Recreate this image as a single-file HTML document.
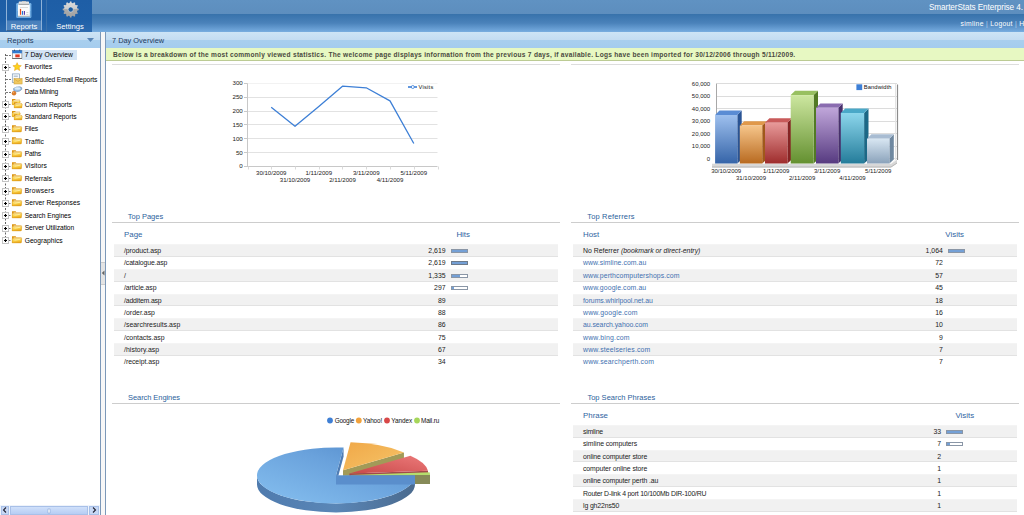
<!DOCTYPE html><html><head><meta charset="utf-8"><style>
*{margin:0;padding:0;box-sizing:border-box}
html,body{width:1024px;height:515px;overflow:hidden;background:#fff;font-family:"Liberation Sans",sans-serif;color:#222}
.a{position:absolute;white-space:nowrap}
#hdr{position:absolute;left:0;top:0;width:1024px;height:32px;background:linear-gradient(#6092c2 0,#5d8ebe 14px,#3772ab 14px,#4a82ba 23px,#72a8dc 31px,#7aaedf 32px)}
#btns{position:absolute;left:0;top:0;width:92px;height:32px;background:linear-gradient(#1e5ea6 0,#1f60a8 20px,#2c6aae 32px)}
.btn{position:absolute;top:0;height:31px}
#b1{left:6px;width:36px;border:1px solid #8fb2d8;border-bottom-color:#3d6590;border-top:none;background:linear-gradient(#1f5fa6 0,#1f5fa6 20px,#4a80bc 21px,#4f86c2 31px)}
#sep{position:absolute;left:46px;top:0;width:1px;height:32px;background:#3a70ab}
.bt{position:absolute;top:22px;font-size:7.6px;color:#fff;width:46px;text-align:center}
.subh{position:absolute;top:32px;height:16px;background:linear-gradient(#cde4f6 0,#c3dcf2 8px,#a9cfee 8px,#a5ccee 16px)}
.vl{position:absolute;top:32px;width:1px;height:483px;background:#7c98b8}
#split{position:absolute;left:101px;top:32px;width:4px;height:483px;background:#f7f7f7}
#notice{position:absolute;left:106px;top:48px;width:918px;height:13px;background:#e7f8c2;border-bottom:1px solid #bccb94}
.tree{position:absolute;left:24.5px;height:12px;line-height:12px;font-size:6.6px;color:#1a1a1a;white-space:nowrap}
.sec{position:absolute;font-size:7px;color:#3c6ea6;letter-spacing:0.25px;white-space:nowrap;line-height:10px}
.hl{position:absolute;height:1px;background:#d0d0d0}
.th{position:absolute;font-size:7.3px;color:#3f72a8;line-height:10px;white-space:nowrap}
.row{position:absolute;background:#f1f1f1;border-bottom:1px solid #e2e2e2;border-top:1px solid #f4f4f4}
.td{position:absolute;font-size:6.9px;color:#222;line-height:12px;white-space:nowrap}
.num{text-align:right}
.lk{color:#3b68ad}
.bar{position:absolute;height:4px;border:1px solid #707a88;background:#fff;overflow:hidden}
.bar i{position:absolute;left:0;top:0;bottom:0;background:#74a0d6}
</style></head><body>
<div id="hdr"></div>
<div id="btns">
  <div class="btn" id="b1"></div>
  <div id="sep"></div>
  <svg class="a" style="left:0;top:0" width="92" height="20" viewBox="0 0 92 20">
    <rect x="16.2" y="3" width="15.2" height="15" rx="1.2" fill="#78b4e8"/>
    <rect x="16.8" y="11" width="14" height="6.5" fill="#5a9ad6" opacity="0.6"/>
    <rect x="18" y="4.5" width="11.8" height="12.2" fill="#fbfbfb"/>
    <rect x="18" y="15.8" width="11.8" height="0.9" fill="#9aa6b0"/>
    <rect x="18.7" y="1.5" width="10.3" height="3.2" rx="0.6" fill="#e6e6e6"/>
    <rect x="18.7" y="3.8" width="10.3" height="1" fill="#9a9a9a"/>
    <rect x="22" y="1" width="4" height="1.2" fill="#c8c8c8"/>
    <rect x="20" y="7" width="8" height="0.5" fill="#b8b8b8"/>
    <rect x="19.9" y="8.9" width="1.2" height="5.9" fill="#e84a1a"/>
    <rect x="21.9" y="11" width="1.1" height="3.8" fill="#1f7ad8"/>
    <rect x="23.8" y="11" width="1.2" height="3.8" fill="#5a3aa8"/>
    <rect x="26.3" y="12" width="2" height="0.6" fill="#bbb"/>
    <rect x="26.3" y="14.2" width="2" height="0.6" fill="#bbb"/>
  </svg>
  <div class="a bt" style="left:1px">Reports</div>
  <svg class="a" style="left:0;top:0" width="92" height="20" viewBox="0 0 92 20">
    <defs><linearGradient id="gg" x1="0" y1="0" x2="0" y2="1"><stop offset="0" stop-color="#dedede"/><stop offset="0.5" stop-color="#cacaca"/><stop offset="0.5" stop-color="#ababab"/><stop offset="1" stop-color="#a2a2a2"/></linearGradient></defs>
    <path d="M77.32 8.45L78.67 8.80L78.67 10.20L77.32 10.55L76.95 11.90L77.95 12.88L77.25 14.09L75.91 13.72L74.92 14.71L75.29 16.05L74.08 16.75L73.10 15.75L71.75 16.12L71.40 17.47L70.00 17.47L69.65 16.12L68.30 15.75L67.32 16.75L66.11 16.05L66.48 14.71L65.49 13.72L64.15 14.09L63.45 12.88L64.45 11.90L64.08 10.55L62.73 10.20L62.73 8.80L64.08 8.45L64.45 7.10L63.45 6.12L64.15 4.91L65.49 5.28L66.48 4.29L66.11 2.95L67.32 2.25L68.30 3.25L69.65 2.88L70.00 1.53L71.40 1.53L71.75 2.88L73.10 3.25L74.08 2.25L75.29 2.95L74.92 4.29L75.91 5.28L77.25 4.91L77.95 6.12L76.95 7.10Z" fill="url(#gg)"/>
    <circle cx="70.7" cy="9.5" r="2.6" fill="#1d5ea2" stroke="#e8e8e8" stroke-width="0.6"/>
  </svg>
  <div class="a bt" style="left:47px">Settings</div>
</div>
<div class="a" style="left:929px;top:3.1px;font-size:8.2px;color:#fff;letter-spacing:-0.1px">SmarterStats Enterprise 4.</div>
<div class="a" style="left:960.5px;top:19.8px;font-size:6.8px;color:#fff;letter-spacing:0.3px">simline <span style="color:#b8d4f0">|</span> Logout <span style="color:#b8d4f0">|</span> Help</div>
<div class="subh" style="left:0;width:101px"></div>
<div class="a" style="left:7px;top:36px;font-size:7.6px;color:#1f3a60">Reports</div>
<svg class="a" style="left:87px;top:38px" width="7" height="5"><path d="M0 0H7L3.5 4Z" fill="#5a86b6"/></svg>
<div id="split"></div>
<div class="vl" style="left:100px"></div>
<div class="vl" style="left:105px"></div>
<div class="subh" style="left:106px;width:918px"></div>
<div class="a" style="left:112px;top:36px;font-size:7.4px;color:#1f3a60">7 Day Overview</div>
<div id="notice"></div>
<div class="a" style="left:113px;top:50.9px;font-size:6.6px;font-weight:bold;color:#4a4a40;letter-spacing:0.27px">Below is a breakdown of the most commonly viewed statistics. The welcome page displays information from the previous 7 days, if available. Logs have been imported for 30/12/2006 through 5/11/2009.</div>
<div class="hl" style="left:112px;top:64px;width:448px;background:#dddddd"></div>
<div class="hl" style="left:571px;top:64px;width:448px;background:#dddddd"></div>

<div class="a" style="left:22px;top:50px;width:55px;height:10px;background:#d3e4f5"></div>
<svg class="a" style="left:0;top:0" width="100" height="250">
<defs><linearGradient id="fg" x1="0" y1="0" x2="0.3" y2="1"><stop offset="0" stop-color="#ffe680"/><stop offset="0.6" stop-color="#f8cc40"/><stop offset="1" stop-color="#e8a820"/></linearGradient></defs>
<path d="M5.5 54V243" stroke="#666" stroke-width="1" stroke-dasharray="2 1.5" fill="none"/>
<path d="M6 55.5H11.5" stroke="#777" stroke-width="1" stroke-dasharray="2 1" fill="none"/>
<rect x="12.3" y="50.3" width="9.6" height="8.3" fill="#fafafa" stroke="#707070" stroke-width="0.6"/><rect x="12.3" y="50.3" width="9.6" height="3" fill="#2f7ad0"/><rect x="14" y="49.6" width="0.8" height="1.4" fill="#345"/><rect x="19.4" y="49.6" width="0.8" height="1.4" fill="#345"/><rect x="15.3" y="54.4" width="4.4" height="2.9" fill="#e03a22"/><rect x="12.3" y="58.2" width="9.6" height="0.6" fill="#444"/>
<path d="M8.5 67.5H11.5" stroke="#777" stroke-width="1" stroke-dasharray="2 1" fill="none"/>
<rect x="2.5" y="64.5" width="6" height="6" fill="#fff" stroke="#c4c4c4" stroke-width="1"/>
<path d="M4 67.5H7M5.5 66.0V69.0" stroke="#000" stroke-width="1.1"/>
<g transform="translate(12.9 62.4) scale(0.84)"><path d="M5 0.3L6.5 3.5L10 3.9L7.4 6.2L8.1 9.7L5 7.9L1.9 9.7L2.6 6.2L0 3.9L3.5 3.5Z" fill="#fcd21c" stroke="#e89a10" stroke-width="0.6"/></g>
<path d="M6 79.5H11.5" stroke="#777" stroke-width="1" stroke-dasharray="2 1" fill="none"/>
<rect x="12.3" y="73.9" width="7.2" height="8.6" fill="#f6f8fa" stroke="#7f9ab8" stroke-width="0.7"/><rect x="13.8" y="75.6" width="4" height="1.2" fill="#a8b8c8"/><rect x="14" y="78.6" width="8.1" height="5.4" fill="#f0c860" stroke="#c89a30" stroke-width="0.5"/><path d="M14 78.8L18 81.5L22 78.8" stroke="#c89a30" stroke-width="0.5" fill="none"/>
<path d="M6 92.5H11.5" stroke="#777" stroke-width="1" stroke-dasharray="2 1" fill="none"/>
<path d="M13.5 88.5Q16 86.5 20 86.8Q22.5 87.3 21.8 89.3Q20.5 91.5 16.5 91.8Q13 91.7 13.5 88.5Z" fill="#9cc0e6" stroke="#6f8eb0" stroke-width="0.6"/><ellipse cx="17.5" cy="88.5" rx="3" ry="1.2" fill="#d8ecfc"/><circle cx="14" cy="93.2" r="2.2" fill="#d87a2a"/><circle cx="13.5" cy="92.6" r="0.8" fill="#f0a860"/>
<path d="M8.5 104.5H11.5" stroke="#777" stroke-width="1" stroke-dasharray="2 1" fill="none"/>
<rect x="2.5" y="101.5" width="6" height="6" fill="#fff" stroke="#c4c4c4" stroke-width="1"/>
<path d="M4 104.5H7M5.5 103.0V106.0" stroke="#000" stroke-width="1.1"/>
<g transform="translate(12 98.8) scale(0.85)"><path d="M0 0.3h3.6l0.8 0.9h5v5.6h-9.4z" fill="#dc9410"/><path d="M1.6 1.6h7.6v3h-7.6z" fill="#fff8e0"/><path d="M0.2 2.6h9.6l-0.7 4.3h-8.9z" fill="url(#fg)" stroke="#d89818" stroke-width="0.4"/><path d="M2.5 4.2l5.5 -0.9" stroke="#fff2b0" stroke-width="0.8"/></g>
<g transform="translate(14 102) scale(0.85)"><path d="M0 0.3h3.6l0.8 0.9h5v5.6h-9.4z" fill="#dc9410"/><path d="M1.6 1.6h7.6v3h-7.6z" fill="#fff8e0"/><path d="M0.2 2.6h9.6l-0.7 4.3h-8.9z" fill="url(#fg)" stroke="#d89818" stroke-width="0.4"/><path d="M2.5 4.2l5.5 -0.9" stroke="#fff2b0" stroke-width="0.8"/></g>
<path d="M8.5 116.5H11.5" stroke="#777" stroke-width="1" stroke-dasharray="2 1" fill="none"/>
<rect x="2.5" y="113.5" width="6" height="6" fill="#fff" stroke="#c4c4c4" stroke-width="1"/>
<path d="M4 116.5H7M5.5 115.0V118.0" stroke="#000" stroke-width="1.1"/>
<g transform="translate(12 110.8) scale(0.85)"><path d="M0 0.3h3.6l0.8 0.9h5v5.6h-9.4z" fill="#dc9410"/><path d="M1.6 1.6h7.6v3h-7.6z" fill="#fff8e0"/><path d="M0.2 2.6h9.6l-0.7 4.3h-8.9z" fill="url(#fg)" stroke="#d89818" stroke-width="0.4"/><path d="M2.5 4.2l5.5 -0.9" stroke="#fff2b0" stroke-width="0.8"/></g>
<g transform="translate(14 114) scale(0.85)"><path d="M0 0.3h3.6l0.8 0.9h5v5.6h-9.4z" fill="#dc9410"/><path d="M1.6 1.6h7.6v3h-7.6z" fill="#fff8e0"/><path d="M0.2 2.6h9.6l-0.7 4.3h-8.9z" fill="url(#fg)" stroke="#d89818" stroke-width="0.4"/><path d="M2.5 4.2l5.5 -0.9" stroke="#fff2b0" stroke-width="0.8"/></g>
<path d="M8.5 129.5H11.5" stroke="#777" stroke-width="1" stroke-dasharray="2 1" fill="none"/>
<rect x="2.5" y="126.5" width="6" height="6" fill="#fff" stroke="#c4c4c4" stroke-width="1"/>
<path d="M4 129.5H7M5.5 128.0V131.0" stroke="#000" stroke-width="1.1"/>
<g transform="translate(12 125) scale(1.0)"><path d="M0 0.3h3.6l0.8 0.9h5v5.6h-9.4z" fill="#dc9410"/><path d="M1.6 1.6h7.6v3h-7.6z" fill="#fff8e0"/><path d="M0.2 2.6h9.6l-0.7 4.3h-8.9z" fill="url(#fg)" stroke="#d89818" stroke-width="0.4"/><path d="M2.5 4.2l5.5 -0.9" stroke="#fff2b0" stroke-width="0.8"/></g>
<path d="M8.5 141.5H11.5" stroke="#777" stroke-width="1" stroke-dasharray="2 1" fill="none"/>
<rect x="2.5" y="138.5" width="6" height="6" fill="#fff" stroke="#c4c4c4" stroke-width="1"/>
<path d="M4 141.5H7M5.5 140.0V143.0" stroke="#000" stroke-width="1.1"/>
<g transform="translate(12 137) scale(1.0)"><path d="M0 0.3h3.6l0.8 0.9h5v5.6h-9.4z" fill="#dc9410"/><path d="M1.6 1.6h7.6v3h-7.6z" fill="#fff8e0"/><path d="M0.2 2.6h9.6l-0.7 4.3h-8.9z" fill="url(#fg)" stroke="#d89818" stroke-width="0.4"/><path d="M2.5 4.2l5.5 -0.9" stroke="#fff2b0" stroke-width="0.8"/></g>
<path d="M8.5 154.5H11.5" stroke="#777" stroke-width="1" stroke-dasharray="2 1" fill="none"/>
<rect x="2.5" y="151.5" width="6" height="6" fill="#fff" stroke="#c4c4c4" stroke-width="1"/>
<path d="M4 154.5H7M5.5 153.0V156.0" stroke="#000" stroke-width="1.1"/>
<g transform="translate(12 150) scale(1.0)"><path d="M0 0.3h3.6l0.8 0.9h5v5.6h-9.4z" fill="#dc9410"/><path d="M1.6 1.6h7.6v3h-7.6z" fill="#fff8e0"/><path d="M0.2 2.6h9.6l-0.7 4.3h-8.9z" fill="url(#fg)" stroke="#d89818" stroke-width="0.4"/><path d="M2.5 4.2l5.5 -0.9" stroke="#fff2b0" stroke-width="0.8"/></g>
<path d="M8.5 166.5H11.5" stroke="#777" stroke-width="1" stroke-dasharray="2 1" fill="none"/>
<rect x="2.5" y="163.5" width="6" height="6" fill="#fff" stroke="#c4c4c4" stroke-width="1"/>
<path d="M4 166.5H7M5.5 165.0V168.0" stroke="#000" stroke-width="1.1"/>
<g transform="translate(12 162) scale(1.0)"><path d="M0 0.3h3.6l0.8 0.9h5v5.6h-9.4z" fill="#dc9410"/><path d="M1.6 1.6h7.6v3h-7.6z" fill="#fff8e0"/><path d="M0.2 2.6h9.6l-0.7 4.3h-8.9z" fill="url(#fg)" stroke="#d89818" stroke-width="0.4"/><path d="M2.5 4.2l5.5 -0.9" stroke="#fff2b0" stroke-width="0.8"/></g>
<path d="M8.5 178.5H11.5" stroke="#777" stroke-width="1" stroke-dasharray="2 1" fill="none"/>
<rect x="2.5" y="175.5" width="6" height="6" fill="#fff" stroke="#c4c4c4" stroke-width="1"/>
<path d="M4 178.5H7M5.5 177.0V180.0" stroke="#000" stroke-width="1.1"/>
<g transform="translate(12 174) scale(1.0)"><path d="M0 0.3h3.6l0.8 0.9h5v5.6h-9.4z" fill="#dc9410"/><path d="M1.6 1.6h7.6v3h-7.6z" fill="#fff8e0"/><path d="M0.2 2.6h9.6l-0.7 4.3h-8.9z" fill="url(#fg)" stroke="#d89818" stroke-width="0.4"/><path d="M2.5 4.2l5.5 -0.9" stroke="#fff2b0" stroke-width="0.8"/></g>
<path d="M8.5 191.5H11.5" stroke="#777" stroke-width="1" stroke-dasharray="2 1" fill="none"/>
<rect x="2.5" y="188.5" width="6" height="6" fill="#fff" stroke="#c4c4c4" stroke-width="1"/>
<path d="M4 191.5H7M5.5 190.0V193.0" stroke="#000" stroke-width="1.1"/>
<g transform="translate(12 187) scale(1.0)"><path d="M0 0.3h3.6l0.8 0.9h5v5.6h-9.4z" fill="#dc9410"/><path d="M1.6 1.6h7.6v3h-7.6z" fill="#fff8e0"/><path d="M0.2 2.6h9.6l-0.7 4.3h-8.9z" fill="url(#fg)" stroke="#d89818" stroke-width="0.4"/><path d="M2.5 4.2l5.5 -0.9" stroke="#fff2b0" stroke-width="0.8"/></g>
<path d="M8.5 203.5H11.5" stroke="#777" stroke-width="1" stroke-dasharray="2 1" fill="none"/>
<rect x="2.5" y="200.5" width="6" height="6" fill="#fff" stroke="#c4c4c4" stroke-width="1"/>
<path d="M4 203.5H7M5.5 202.0V205.0" stroke="#000" stroke-width="1.1"/>
<g transform="translate(12 199) scale(1.0)"><path d="M0 0.3h3.6l0.8 0.9h5v5.6h-9.4z" fill="#dc9410"/><path d="M1.6 1.6h7.6v3h-7.6z" fill="#fff8e0"/><path d="M0.2 2.6h9.6l-0.7 4.3h-8.9z" fill="url(#fg)" stroke="#d89818" stroke-width="0.4"/><path d="M2.5 4.2l5.5 -0.9" stroke="#fff2b0" stroke-width="0.8"/></g>
<path d="M8.5 215.5H11.5" stroke="#777" stroke-width="1" stroke-dasharray="2 1" fill="none"/>
<rect x="2.5" y="212.5" width="6" height="6" fill="#fff" stroke="#c4c4c4" stroke-width="1"/>
<path d="M4 215.5H7M5.5 214.0V217.0" stroke="#000" stroke-width="1.1"/>
<g transform="translate(12 211) scale(1.0)"><path d="M0 0.3h3.6l0.8 0.9h5v5.6h-9.4z" fill="#dc9410"/><path d="M1.6 1.6h7.6v3h-7.6z" fill="#fff8e0"/><path d="M0.2 2.6h9.6l-0.7 4.3h-8.9z" fill="url(#fg)" stroke="#d89818" stroke-width="0.4"/><path d="M2.5 4.2l5.5 -0.9" stroke="#fff2b0" stroke-width="0.8"/></g>
<path d="M8.5 228.5H11.5" stroke="#777" stroke-width="1" stroke-dasharray="2 1" fill="none"/>
<rect x="2.5" y="225.5" width="6" height="6" fill="#fff" stroke="#c4c4c4" stroke-width="1"/>
<path d="M4 228.5H7M5.5 227.0V230.0" stroke="#000" stroke-width="1.1"/>
<g transform="translate(12 224) scale(1.0)"><path d="M0 0.3h3.6l0.8 0.9h5v5.6h-9.4z" fill="#dc9410"/><path d="M1.6 1.6h7.6v3h-7.6z" fill="#fff8e0"/><path d="M0.2 2.6h9.6l-0.7 4.3h-8.9z" fill="url(#fg)" stroke="#d89818" stroke-width="0.4"/><path d="M2.5 4.2l5.5 -0.9" stroke="#fff2b0" stroke-width="0.8"/></g>
<path d="M8.5 240.5H11.5" stroke="#777" stroke-width="1" stroke-dasharray="2 1" fill="none"/>
<rect x="2.5" y="237.5" width="6" height="6" fill="#fff" stroke="#c4c4c4" stroke-width="1"/>
<path d="M4 240.5H7M5.5 239.0V242.0" stroke="#000" stroke-width="1.1"/>
<g transform="translate(12 236) scale(1.0)"><path d="M0 0.3h3.6l0.8 0.9h5v5.6h-9.4z" fill="#dc9410"/><path d="M1.6 1.6h7.6v3h-7.6z" fill="#fff8e0"/><path d="M0.2 2.6h9.6l-0.7 4.3h-8.9z" fill="url(#fg)" stroke="#d89818" stroke-width="0.4"/><path d="M2.5 4.2l5.5 -0.9" stroke="#fff2b0" stroke-width="0.8"/></g>
</svg>
<div class="a" style="left:24.70px;top:52.03px;font-size:6.7px;line-height:6.7px;color:#000;font-weight:normal;font-style:normal;letter-spacing:0.071px">7 Day Overview</div>
<div class="a" style="left:24.70px;top:64.40px;font-size:6.7px;line-height:6.7px;color:#000;font-weight:normal;font-style:normal;letter-spacing:-0.013px">Favorites</div>
<div class="a" style="left:24.70px;top:76.77px;font-size:6.7px;line-height:6.7px;color:#000;font-weight:normal;font-style:normal;letter-spacing:-0.129px">Scheduled Email Reports</div>
<div class="a" style="left:24.70px;top:89.14px;font-size:6.7px;line-height:6.7px;color:#000;font-weight:normal;font-style:normal;letter-spacing:-0.217px">Data Mining</div>
<div class="a" style="left:24.70px;top:101.51px;font-size:6.7px;line-height:6.7px;color:#000;font-weight:normal;font-style:normal;letter-spacing:-0.088px">Custom Reports</div>
<div class="a" style="left:24.70px;top:113.88px;font-size:6.7px;line-height:6.7px;color:#000;font-weight:normal;font-style:normal;letter-spacing:-0.033px">Standard Reports</div>
<div class="a" style="left:24.70px;top:126.25px;font-size:6.7px;line-height:6.7px;color:#000;font-weight:normal;font-style:normal;letter-spacing:-0.205px">Files</div>
<div class="a" style="left:24.70px;top:138.62px;font-size:6.7px;line-height:6.7px;color:#000;font-weight:normal;font-style:normal;letter-spacing:0.169px">Traffic</div>
<div class="a" style="left:24.70px;top:150.99px;font-size:6.7px;line-height:6.7px;color:#000;font-weight:normal;font-style:normal;letter-spacing:-0.182px">Paths</div>
<div class="a" style="left:24.70px;top:163.36px;font-size:6.7px;line-height:6.7px;color:#000;font-weight:normal;font-style:normal;letter-spacing:0.061px">Visitors</div>
<div class="a" style="left:24.70px;top:175.73px;font-size:6.7px;line-height:6.7px;color:#000;font-weight:normal;font-style:normal;letter-spacing:-0.005px">Referrals</div>
<div class="a" style="left:24.70px;top:188.10px;font-size:6.7px;line-height:6.7px;color:#000;font-weight:normal;font-style:normal;letter-spacing:0.216px">Browsers</div>
<div class="a" style="left:24.70px;top:200.47px;font-size:6.7px;line-height:6.7px;color:#000;font-weight:normal;font-style:normal;letter-spacing:0.024px">Server Responses</div>
<div class="a" style="left:24.70px;top:212.84px;font-size:6.7px;line-height:6.7px;color:#000;font-weight:normal;font-style:normal;letter-spacing:-0.066px">Search Engines</div>
<div class="a" style="left:24.70px;top:225.21px;font-size:6.7px;line-height:6.7px;color:#000;font-weight:normal;font-style:normal;letter-spacing:-0.058px">Server Utilization</div>
<div class="a" style="left:24.70px;top:237.58px;font-size:6.7px;line-height:6.7px;color:#000;font-weight:normal;font-style:normal;letter-spacing:-0.002px">Geographics</div>
<svg class="a" style="left:0;top:0" width="1024" height="200">
<path d="M247.5 166.5H437.5" stroke="#c8c8c8" stroke-width="1"/>
<path d="M244 166.5H247.5" stroke="#c8c8c8" stroke-width="1"/>
<path d="M247.5 152.5H437.5" stroke="#e2e2e2" stroke-width="1"/>
<path d="M244 152.5H247.5" stroke="#c8c8c8" stroke-width="1"/>
<path d="M247.5 138.5H437.5" stroke="#e2e2e2" stroke-width="1"/>
<path d="M244 138.5H247.5" stroke="#c8c8c8" stroke-width="1"/>
<path d="M247.5 124.5H437.5" stroke="#e2e2e2" stroke-width="1"/>
<path d="M244 124.5H247.5" stroke="#c8c8c8" stroke-width="1"/>
<path d="M247.5 111.5H437.5" stroke="#e2e2e2" stroke-width="1"/>
<path d="M244 111.5H247.5" stroke="#c8c8c8" stroke-width="1"/>
<path d="M247.5 97.5H437.5" stroke="#e2e2e2" stroke-width="1"/>
<path d="M244 97.5H247.5" stroke="#c8c8c8" stroke-width="1"/>
<path d="M247.5 83.5H437.5" stroke="#f2f2f2" stroke-width="1"/>
<path d="M244 83.5H247.5" stroke="#c8c8c8" stroke-width="1"/>
<path d="M247.5 83.4V167.0" stroke="#c8c8c8" stroke-width="1"/>
<path d="M248.5 166.5V169.5" stroke="#dadada" stroke-width="1"/>
<path d="M271.5 166.5V169.5" stroke="#dadada" stroke-width="1"/>
<path d="M295.5 166.5V169.5" stroke="#dadada" stroke-width="1"/>
<path d="M319.5 166.5V169.5" stroke="#dadada" stroke-width="1"/>
<path d="M342.5 166.5V169.5" stroke="#dadada" stroke-width="1"/>
<path d="M366.5 166.5V169.5" stroke="#dadada" stroke-width="1"/>
<path d="M390.5 166.5V169.5" stroke="#dadada" stroke-width="1"/>
<path d="M414.5 166.5V169.5" stroke="#dadada" stroke-width="1"/>
<path d="M438.5 166.5V169.5" stroke="#dadada" stroke-width="1"/>
<polyline points="271.2,107.2 295.0,126.3 318.8,106.4 342.5,86.2 366.2,87.8 390.0,100.9 413.8,143.5" fill="none" stroke="#3d7fd6" stroke-width="1.3" stroke-linejoin="round"/>
<path d="M408 87H417" stroke="#3d7fd6" stroke-width="1.6"/><circle cx="412.8" cy="87" r="1.5" fill="#fff" stroke="#3d7fd6" stroke-width="0.8"/>
</svg>
<div class="a" style="right:781.20px;top:163.45px;font-size:6.2px;line-height:6.2px;color:#222;font-weight:normal;font-style:normal">0</div>
<div class="a" style="right:781.20px;top:149.60px;font-size:6.2px;line-height:6.2px;color:#222;font-weight:normal;font-style:normal">50</div>
<div class="a" style="right:781.20px;top:135.75px;font-size:6.2px;line-height:6.2px;color:#222;font-weight:normal;font-style:normal">100</div>
<div class="a" style="right:781.20px;top:121.90px;font-size:6.2px;line-height:6.2px;color:#222;font-weight:normal;font-style:normal">150</div>
<div class="a" style="right:781.20px;top:108.05px;font-size:6.2px;line-height:6.2px;color:#222;font-weight:normal;font-style:normal">200</div>
<div class="a" style="right:781.20px;top:94.20px;font-size:6.2px;line-height:6.2px;color:#222;font-weight:normal;font-style:normal">250</div>
<div class="a" style="right:781.20px;top:80.35px;font-size:6.2px;line-height:6.2px;color:#222;font-weight:normal;font-style:normal">300</div>
<div class="a" style="left:171.25px;width:200px;text-align:center;top:169.84px;font-size:6.1px;line-height:6.1px;color:#222;font-weight:normal;font-style:normal">30/10/2009</div>
<div class="a" style="left:195.00px;width:200px;text-align:center;top:177.04px;font-size:6.1px;line-height:6.1px;color:#222;font-weight:normal;font-style:normal">31/10/2009</div>
<div class="a" style="left:218.75px;width:200px;text-align:center;top:169.84px;font-size:6.1px;line-height:6.1px;color:#222;font-weight:normal;font-style:normal">1/11/2009</div>
<div class="a" style="left:242.50px;width:200px;text-align:center;top:177.04px;font-size:6.1px;line-height:6.1px;color:#222;font-weight:normal;font-style:normal">2/11/2009</div>
<div class="a" style="left:266.25px;width:200px;text-align:center;top:169.84px;font-size:6.1px;line-height:6.1px;color:#222;font-weight:normal;font-style:normal">3/11/2009</div>
<div class="a" style="left:290.00px;width:200px;text-align:center;top:177.04px;font-size:6.1px;line-height:6.1px;color:#222;font-weight:normal;font-style:normal">4/11/2009</div>
<div class="a" style="left:313.75px;width:200px;text-align:center;top:169.84px;font-size:6.1px;line-height:6.1px;color:#222;font-weight:normal;font-style:normal">5/11/2009</div>
<div class="a" style="left:418.60px;top:84.77px;font-size:5.7px;line-height:5.7px;color:#111;font-weight:normal;font-style:normal;letter-spacing:0.233px">Visits</div>
<svg class="a" style="left:0;top:0" width="1024" height="200">
<defs>
<linearGradient id="g0" x1="0" y1="0" x2="0" y2="1"><stop offset="0" stop-color="#9ec0ee"/><stop offset="1" stop-color="#3564a8"/></linearGradient>
<linearGradient id="g1" x1="0" y1="0" x2="0" y2="1"><stop offset="0" stop-color="#f6c58a"/><stop offset="1" stop-color="#b86a20"/></linearGradient>
<linearGradient id="g2" x1="0" y1="0" x2="0" y2="1"><stop offset="0" stop-color="#e89a9a"/><stop offset="1" stop-color="#9e2c2c"/></linearGradient>
<linearGradient id="g3" x1="0" y1="0" x2="0" y2="1"><stop offset="0" stop-color="#cde7a0"/><stop offset="1" stop-color="#649030"/></linearGradient>
<linearGradient id="g4" x1="0" y1="0" x2="0" y2="1"><stop offset="0" stop-color="#c0a6da"/><stop offset="1" stop-color="#563a80"/></linearGradient>
<linearGradient id="g5" x1="0" y1="0" x2="0" y2="1"><stop offset="0" stop-color="#8cd6ec"/><stop offset="1" stop-color="#247c9a"/></linearGradient>
<linearGradient id="g6" x1="0" y1="0" x2="0" y2="1"><stop offset="0" stop-color="#d8e6f2"/><stop offset="1" stop-color="#8aa2ba"/></linearGradient>
</defs>
<path d="M716.5 158.5H897" stroke="#dcdcdc" stroke-width="1"/>
<path d="M716.5 146.5H897" stroke="#dcdcdc" stroke-width="1"/>
<path d="M716.5 133.5H897" stroke="#dcdcdc" stroke-width="1"/>
<path d="M716.5 121.5H897" stroke="#dcdcdc" stroke-width="1"/>
<path d="M716.5 108.5H897" stroke="#dcdcdc" stroke-width="1"/>
<path d="M716.5 96.5H897" stroke="#dcdcdc" stroke-width="1"/>
<path d="M716.5 83.5H897" stroke="#dcdcdc" stroke-width="1"/>
<path d="M716.5 83.6V163" stroke="#a8a8a8" stroke-width="1"/>
<path d="M895.5 84V161" stroke="#e4e4e4" stroke-width="1"/>
<path d="M897.5 84.5V160" stroke="#8c8c8c" stroke-width="1.2"/>
<path d="M712 163.5H891L897 159.3V163.5L891 167.5H712Z" fill="#d8d8d8"/>
<path d="M712 163.5H891L897 159.3" fill="none" stroke="#f4f4f4" stroke-width="1"/>
<path d="M712 167H891L897 163" fill="none" stroke="#b8b8b8" stroke-width="1"/>
<path d="M737.3 115L741.6999999999999 110.6V159.6L737.3 163.5Z" fill="#2a5494"/>
<path d="M715.1 115L719.5 110.6H741.6999999999999L737.3 115Z" fill="#5a8cd4"/>
<rect x="715.1" y="115" width="22.2" height="48.5" fill="url(#g0)"/>
<path d="M762.2 125.6L766.6 121.19999999999999V159.6L762.2 163.5Z" fill="#a0581a"/>
<path d="M739.8 125.6L744.1999999999999 121.19999999999999H766.6L762.2 125.6Z" fill="#e0984a"/>
<rect x="739.8" y="125.6" width="22.4" height="37.9" fill="url(#g1)"/>
<path d="M787.4 122.7L791.8 118.3V159.6L787.4 163.5Z" fill="#862424"/>
<path d="M765 122.7L769.4 118.3H791.8L787.4 122.7Z" fill="#c85a5a"/>
<rect x="765" y="122.7" width="22.4" height="40.8" fill="url(#g2)"/>
<path d="M813.6 95.1L818.0 90.69999999999999V159.6L813.6 163.5Z" fill="#527a24"/>
<path d="M790.7 95.1L795.1 90.69999999999999H818.0L813.6 95.1Z" fill="#98c060"/>
<rect x="790.7" y="95.1" width="22.9" height="68.4" fill="url(#g3)"/>
<path d="M838.3 107.8L842.6999999999999 103.39999999999999V159.6L838.3 163.5Z" fill="#48306c"/>
<path d="M816 107.8L820.4 103.39999999999999H842.6999999999999L838.3 107.8Z" fill="#8a6cb0"/>
<rect x="816" y="107.8" width="22.3" height="55.7" fill="url(#g4)"/>
<path d="M864.1 113L868.5 108.6V159.6L864.1 163.5Z" fill="#1c6886"/>
<path d="M840.8 113L845.1999999999999 108.6H868.5L864.1 113Z" fill="#4aa8c8"/>
<rect x="840.8" y="113" width="23.3" height="50.5" fill="url(#g5)"/>
<path d="M889.4 138.7L893.8 134.29999999999998V159.6L889.4 163.5Z" fill="#6f88a0"/>
<path d="M867 138.7L871.4 134.29999999999998H893.8L889.4 138.7Z" fill="#a8bcd2"/>
<rect x="867" y="138.7" width="22.4" height="24.8" fill="url(#g6)"/>
<rect x="856.4" y="84.3" width="5.8" height="5.8" fill="#3d7fd6"/>
</svg>
<div class="a" style="right:313.80px;top:80.62px;font-size:6.0px;line-height:6.0px;color:#222;font-weight:normal;font-style:normal">60,000</div>
<div class="a" style="right:313.80px;top:93.12px;font-size:6.0px;line-height:6.0px;color:#222;font-weight:normal;font-style:normal">50,000</div>
<div class="a" style="right:313.80px;top:105.62px;font-size:6.0px;line-height:6.0px;color:#222;font-weight:normal;font-style:normal">40,000</div>
<div class="a" style="right:313.80px;top:118.12px;font-size:6.0px;line-height:6.0px;color:#222;font-weight:normal;font-style:normal">30,000</div>
<div class="a" style="right:313.80px;top:130.62px;font-size:6.0px;line-height:6.0px;color:#222;font-weight:normal;font-style:normal">20,000</div>
<div class="a" style="right:313.80px;top:143.12px;font-size:6.0px;line-height:6.0px;color:#222;font-weight:normal;font-style:normal">10,000</div>
<div class="a" style="right:313.80px;top:155.62px;font-size:6.0px;line-height:6.0px;color:#222;font-weight:normal;font-style:normal">0</div>
<div class="a" style="left:626.20px;width:200px;text-align:center;top:168.22px;font-size:6.0px;line-height:6.0px;color:#222;font-weight:normal;font-style:normal">30/10/2009</div>
<div class="a" style="left:651.00px;width:200px;text-align:center;top:175.42px;font-size:6.0px;line-height:6.0px;color:#222;font-weight:normal;font-style:normal">31/10/2009</div>
<div class="a" style="left:676.20px;width:200px;text-align:center;top:168.22px;font-size:6.0px;line-height:6.0px;color:#222;font-weight:normal;font-style:normal">1/11/2009</div>
<div class="a" style="left:702.15px;width:200px;text-align:center;top:175.42px;font-size:6.0px;line-height:6.0px;color:#222;font-weight:normal;font-style:normal">2/11/2009</div>
<div class="a" style="left:727.15px;width:200px;text-align:center;top:168.22px;font-size:6.0px;line-height:6.0px;color:#222;font-weight:normal;font-style:normal">3/11/2009</div>
<div class="a" style="left:752.45px;width:200px;text-align:center;top:175.42px;font-size:6.0px;line-height:6.0px;color:#222;font-weight:normal;font-style:normal">4/11/2009</div>
<div class="a" style="left:778.20px;width:200px;text-align:center;top:168.22px;font-size:6.0px;line-height:6.0px;color:#222;font-weight:normal;font-style:normal">5/11/2009</div>
<div class="a" style="left:863.70px;top:85.39px;font-size:5.8px;line-height:5.8px;color:#111;font-weight:normal;font-style:normal;letter-spacing:0.102px">Bandwidth</div>
<div class="hl" style="left:112px;top:222px;width:448px;background:#cdcdcd"></div>
<div class="a" style="left:127.80px;top:212.85px;font-size:7.5px;line-height:7.5px;color:#2c5f9c;font-weight:normal;font-style:normal;letter-spacing:-0.006px">Top Pages</div>
<div class="a" style="left:124.00px;top:231.11px;font-size:7.9px;line-height:7.9px;color:#2f64a2;font-weight:normal;font-style:normal">Page</div>
<div class="a" style="left:363.20px;width:200px;text-align:center;top:231.11px;font-size:7.9px;line-height:7.9px;color:#2f64a2;font-weight:normal;font-style:normal">Hits</div>
<div class="row" style="left:114.2px;top:244.10px;width:443.59999999999997px;height:12.7px"></div>
<div class="a" style="left:124.00px;top:248.06px;font-size:6.9px;line-height:6.9px;color:#222;font-weight:normal;font-style:normal;letter-spacing:-0.070px">/product.asp</div>
<div class="a" style="right:578.40px;top:248.06px;font-size:6.9px;line-height:6.9px;color:#222;font-weight:normal;font-style:normal">2,619</div>
<div class="bar" style="left:451px;top:248.90px;width:17px;border-color:#8a96a6"><i style="width:100%"></i></div>
<div class="a" style="left:124.00px;top:260.42px;font-size:6.9px;line-height:6.9px;color:#222;font-weight:normal;font-style:normal;letter-spacing:-0.109px">/catalogue.asp</div>
<div class="a" style="right:578.40px;top:260.42px;font-size:6.9px;line-height:6.9px;color:#222;font-weight:normal;font-style:normal">2,619</div>
<div class="bar" style="left:451px;top:261.26px;width:17px;border-color:#6d7a8a"><i style="width:100%"></i></div>
<div class="row" style="left:114.2px;top:268.82px;width:443.59999999999997px;height:12.7px"></div>
<div class="a" style="left:124.00px;top:272.78px;font-size:6.9px;line-height:6.9px;color:#222;font-weight:normal;font-style:normal">/</div>
<div class="a" style="right:578.40px;top:272.78px;font-size:6.9px;line-height:6.9px;color:#222;font-weight:normal;font-style:normal">1,335</div>
<div class="bar" style="left:451px;top:273.62px;width:17px;border-color:#8a96a6"><i style="width:50%"></i></div>
<div class="a" style="left:124.00px;top:285.14px;font-size:6.9px;line-height:6.9px;color:#222;font-weight:normal;font-style:normal;letter-spacing:-0.077px">/article.asp</div>
<div class="a" style="right:578.40px;top:285.14px;font-size:6.9px;line-height:6.9px;color:#222;font-weight:normal;font-style:normal">297</div>
<div class="bar" style="left:451px;top:285.98px;width:17px;border-color:#8a96a6"><i style="width:10%"></i></div>
<div class="row" style="left:114.2px;top:293.54px;width:443.59999999999997px;height:12.7px"></div>
<div class="a" style="left:124.00px;top:297.50px;font-size:6.9px;line-height:6.9px;color:#222;font-weight:normal;font-style:normal;letter-spacing:-0.163px">/additem.asp</div>
<div class="a" style="right:578.40px;top:297.50px;font-size:6.9px;line-height:6.9px;color:#222;font-weight:normal;font-style:normal">89</div>
<div class="a" style="left:124.00px;top:309.86px;font-size:6.9px;line-height:6.9px;color:#222;font-weight:normal;font-style:normal;letter-spacing:0.034px">/order.asp</div>
<div class="a" style="right:578.40px;top:309.86px;font-size:6.9px;line-height:6.9px;color:#222;font-weight:normal;font-style:normal">88</div>
<div class="row" style="left:114.2px;top:318.26px;width:443.59999999999997px;height:12.7px"></div>
<div class="a" style="left:124.00px;top:322.22px;font-size:6.9px;line-height:6.9px;color:#222;font-weight:normal;font-style:normal;letter-spacing:0.021px">/searchresults.asp</div>
<div class="a" style="right:578.40px;top:322.22px;font-size:6.9px;line-height:6.9px;color:#222;font-weight:normal;font-style:normal">86</div>
<div class="a" style="left:124.00px;top:334.58px;font-size:6.9px;line-height:6.9px;color:#222;font-weight:normal;font-style:normal;letter-spacing:-0.008px">/contacts.asp</div>
<div class="a" style="right:578.40px;top:334.58px;font-size:6.9px;line-height:6.9px;color:#222;font-weight:normal;font-style:normal">75</div>
<div class="row" style="left:114.2px;top:342.98px;width:443.59999999999997px;height:12.7px"></div>
<div class="a" style="left:124.00px;top:346.94px;font-size:6.9px;line-height:6.9px;color:#222;font-weight:normal;font-style:normal;letter-spacing:0.039px">/history.asp</div>
<div class="a" style="right:578.40px;top:346.94px;font-size:6.9px;line-height:6.9px;color:#222;font-weight:normal;font-style:normal">67</div>
<div class="a" style="left:124.00px;top:359.30px;font-size:6.9px;line-height:6.9px;color:#222;font-weight:normal;font-style:normal;letter-spacing:-0.035px">/receipt.asp</div>
<div class="a" style="right:578.40px;top:359.30px;font-size:6.9px;line-height:6.9px;color:#222;font-weight:normal;font-style:normal">34</div>
<div class="hl" style="left:571px;top:222px;width:448px;background:#cdcdcd"></div>
<div class="a" style="left:587.30px;top:212.85px;font-size:7.5px;line-height:7.5px;color:#2c5f9c;font-weight:normal;font-style:normal;letter-spacing:0.151px">Top Referrers</div>
<div class="a" style="left:583.00px;top:231.11px;font-size:7.9px;line-height:7.9px;color:#2f64a2;font-weight:normal;font-style:normal">Host</div>
<div class="a" style="left:854.70px;width:200px;text-align:center;top:231.11px;font-size:7.9px;line-height:7.9px;color:#2f64a2;font-weight:normal;font-style:normal">Visits</div>
<div class="row" style="left:573.2px;top:244.10px;width:444.0999999999999px;height:12.7px"></div>
<div class="a" style="left:583.00px;top:248.06px;font-size:6.9px;line-height:6.9px;color:#222;font-weight:normal;font-style:normal;letter-spacing:0.006px">No Referrer <i>(bookmark or direct-entry)</i></div>
<div class="a" style="right:81.20px;top:248.06px;font-size:6.9px;line-height:6.9px;color:#222;font-weight:normal;font-style:normal">1,064</div>
<div class="bar" style="left:947.5px;top:248.90px;width:17px;border-color:#8a96a6"><i style="width:100%"></i></div>
<div class="a" style="left:583.00px;top:260.42px;font-size:6.9px;line-height:6.9px;color:#4270b0;font-weight:normal;font-style:normal;letter-spacing:0.049px">www.simline.com.au</div>
<div class="a" style="right:81.20px;top:260.42px;font-size:6.9px;line-height:6.9px;color:#222;font-weight:normal;font-style:normal">72</div>
<div class="row" style="left:573.2px;top:268.82px;width:444.0999999999999px;height:12.7px"></div>
<div class="a" style="left:583.00px;top:272.78px;font-size:6.9px;line-height:6.9px;color:#4270b0;font-weight:normal;font-style:normal;letter-spacing:0.092px">www.perthcomputershops.com</div>
<div class="a" style="right:81.20px;top:272.78px;font-size:6.9px;line-height:6.9px;color:#222;font-weight:normal;font-style:normal">57</div>
<div class="a" style="left:583.00px;top:285.14px;font-size:6.9px;line-height:6.9px;color:#4270b0;font-weight:normal;font-style:normal;letter-spacing:0.096px">www.google.com.au</div>
<div class="a" style="right:81.20px;top:285.14px;font-size:6.9px;line-height:6.9px;color:#222;font-weight:normal;font-style:normal">45</div>
<div class="row" style="left:573.2px;top:293.54px;width:444.0999999999999px;height:12.7px"></div>
<div class="a" style="left:583.00px;top:297.50px;font-size:6.9px;line-height:6.9px;color:#4270b0;font-weight:normal;font-style:normal;letter-spacing:-0.059px">forums.whirlpool.net.au</div>
<div class="a" style="right:81.20px;top:297.50px;font-size:6.9px;line-height:6.9px;color:#222;font-weight:normal;font-style:normal">18</div>
<div class="a" style="left:583.00px;top:309.86px;font-size:6.9px;line-height:6.9px;color:#4270b0;font-weight:normal;font-style:normal;letter-spacing:0.179px">www.google.com</div>
<div class="a" style="right:81.20px;top:309.86px;font-size:6.9px;line-height:6.9px;color:#222;font-weight:normal;font-style:normal">16</div>
<div class="row" style="left:573.2px;top:318.26px;width:444.0999999999999px;height:12.7px"></div>
<div class="a" style="left:583.00px;top:322.22px;font-size:6.9px;line-height:6.9px;color:#4270b0;font-weight:normal;font-style:normal;letter-spacing:-0.047px">au.search.yahoo.com</div>
<div class="a" style="right:81.20px;top:322.22px;font-size:6.9px;line-height:6.9px;color:#222;font-weight:normal;font-style:normal">10</div>
<div class="a" style="left:583.00px;top:334.58px;font-size:6.9px;line-height:6.9px;color:#4270b0;font-weight:normal;font-style:normal;letter-spacing:0.197px">www.bing.com</div>
<div class="a" style="right:81.20px;top:334.58px;font-size:6.9px;line-height:6.9px;color:#222;font-weight:normal;font-style:normal">9</div>
<div class="row" style="left:573.2px;top:342.98px;width:444.0999999999999px;height:12.7px"></div>
<div class="a" style="left:583.00px;top:346.94px;font-size:6.9px;line-height:6.9px;color:#4270b0;font-weight:normal;font-style:normal;letter-spacing:0.166px">www.steelseries.com</div>
<div class="a" style="right:81.20px;top:346.94px;font-size:6.9px;line-height:6.9px;color:#222;font-weight:normal;font-style:normal">7</div>
<div class="a" style="left:583.00px;top:359.30px;font-size:6.9px;line-height:6.9px;color:#4270b0;font-weight:normal;font-style:normal;letter-spacing:0.174px">www.searchperth.com</div>
<div class="a" style="right:81.20px;top:359.30px;font-size:6.9px;line-height:6.9px;color:#222;font-weight:normal;font-style:normal">7</div>
<div class="hl" style="left:112px;top:403px;width:448px;background:#cdcdcd"></div>
<div class="a" style="left:128.00px;top:393.85px;font-size:7.5px;line-height:7.5px;color:#2c5f9c;font-weight:normal;font-style:normal;letter-spacing:-0.068px">Search Engines</div>
<div class="hl" style="left:571px;top:403px;width:448px;background:#cdcdcd"></div>
<div class="a" style="left:587.40px;top:393.85px;font-size:7.5px;line-height:7.5px;color:#2c5f9c;font-weight:normal;font-style:normal;letter-spacing:0.014px">Top Search Phrases</div>
<div class="a" style="left:583.00px;top:412.31px;font-size:7.9px;line-height:7.9px;color:#2f64a2;font-weight:normal;font-style:normal">Phrase</div>
<div class="a" style="left:864.80px;width:200px;text-align:center;top:412.31px;font-size:7.9px;line-height:7.9px;color:#2f64a2;font-weight:normal;font-style:normal">Visits</div>
<div class="row" style="left:573.2px;top:425.00px;width:444.0999999999999px;height:12.7px"></div>
<div class="a" style="left:583.00px;top:428.96px;font-size:6.9px;line-height:6.9px;color:#222;font-weight:normal;font-style:normal;letter-spacing:-0.222px">simline</div>
<div class="a" style="right:82.80px;top:428.96px;font-size:6.9px;line-height:6.9px;color:#222;font-weight:normal;font-style:normal">33</div>
<div class="bar" style="left:946px;top:429.80px;width:17px;border-color:#8a96a6"><i style="width:100%"></i></div>
<div class="a" style="left:583.00px;top:441.29px;font-size:6.9px;line-height:6.9px;color:#222;font-weight:normal;font-style:normal;letter-spacing:-0.078px">simline computers</div>
<div class="a" style="right:82.80px;top:441.29px;font-size:6.9px;line-height:6.9px;color:#222;font-weight:normal;font-style:normal">7</div>
<div class="bar" style="left:946px;top:442.13px;width:17px;border-color:#8a96a6"><i style="width:20%"></i></div>
<div class="row" style="left:573.2px;top:449.66px;width:444.0999999999999px;height:12.7px"></div>
<div class="a" style="left:583.00px;top:453.62px;font-size:6.9px;line-height:6.9px;color:#222;font-weight:normal;font-style:normal;letter-spacing:-0.098px">online computer store</div>
<div class="a" style="right:82.80px;top:453.62px;font-size:6.9px;line-height:6.9px;color:#222;font-weight:normal;font-style:normal">2</div>
<div class="a" style="left:583.00px;top:465.95px;font-size:6.9px;line-height:6.9px;color:#222;font-weight:normal;font-style:normal;letter-spacing:-0.098px">computer online store</div>
<div class="a" style="right:82.80px;top:465.95px;font-size:6.9px;line-height:6.9px;color:#222;font-weight:normal;font-style:normal">1</div>
<div class="row" style="left:573.2px;top:474.32px;width:444.0999999999999px;height:12.7px"></div>
<div class="a" style="left:583.00px;top:478.28px;font-size:6.9px;line-height:6.9px;color:#222;font-weight:normal;font-style:normal;letter-spacing:-0.118px">online computer perth .au</div>
<div class="a" style="right:82.80px;top:478.28px;font-size:6.9px;line-height:6.9px;color:#222;font-weight:normal;font-style:normal">1</div>
<div class="a" style="left:583.00px;top:490.61px;font-size:6.9px;line-height:6.9px;color:#222;font-weight:normal;font-style:normal;letter-spacing:-0.211px">Router D-link 4 port 10/100Mb DIR-100/RU</div>
<div class="a" style="right:82.80px;top:490.61px;font-size:6.9px;line-height:6.9px;color:#222;font-weight:normal;font-style:normal">1</div>
<div class="row" style="left:573.2px;top:498.98px;width:444.0999999999999px;height:12.7px"></div>
<div class="a" style="left:583.00px;top:502.94px;font-size:6.9px;line-height:6.9px;color:#222;font-weight:normal;font-style:normal;letter-spacing:-0.124px">lg gh22ns50</div>
<div class="a" style="right:82.80px;top:502.94px;font-size:6.9px;line-height:6.9px;color:#222;font-weight:normal;font-style:normal">1</div>
<svg class="a" style="left:0;top:0" width="1024" height="515">
<defs><linearGradient id="pg" x1="0" y1="1" x2="1" y2="0"><stop offset="0" stop-color="#86c0f0"/><stop offset="0.6" stop-color="#6aa2dc"/><stop offset="1" stop-color="#5088c8"/></linearGradient><linearGradient id="pr" x1="0" y1="0" x2="1" y2="0"><stop offset="0" stop-color="#4f7bae"/><stop offset="0.5" stop-color="#5a86b6"/><stop offset="1" stop-color="#4a6a8e"/></linearGradient><linearGradient id="py" x1="0" y1="0" x2="1" y2="1"><stop offset="0" stop-color="#f0a848"/><stop offset="1" stop-color="#f6c468"/></linearGradient><linearGradient id="pd" x1="0" y1="1" x2="1" y2="0"><stop offset="0" stop-color="#c84848"/><stop offset="1" stop-color="#ec7a7a"/></linearGradient></defs>
<path d="M343.00 470.20L403.96 452.39V461.39L343.00 479.20Z" fill="#a29a58"/>
<path d="M343.00 470.20L403.96 452.39A79.0 28.0 0 0 0 350.57 442.33Z" fill="url(#py)"/>
<path d="M349.40 473.60L427.97 470.67V479.67L349.40 482.60Z" fill="#a24a4a"/>
<path d="M349.40 473.60L427.97 470.67A79.0 28.0 0 0 0 410.36 455.79Z" fill="url(#pd)"/>
<path d="M351.00 475.10L430.00 475.10V484.10H351.00Z" fill="#868a58"/>
<path d="M351.00 475.10L430.00 475.10A79.0 28.0 0 0 0 429.57 472.17Z" fill="#b4dc6c"/>
<path d="M257.00 475.40A79.0 28.0 0 0 0 415.00 475.40V484.40A79.0 28.0 0 0 1 257.00 484.40Z" fill="url(#pr)"/>
<path d="M336.0 475.4L343.57 447.53V456.53L336.0 484.4Z" fill="#4e7cb4"/>
<path d="M336.0 475.4L343.57 447.53A79.0 28.0 0 1 0 415.00 475.40Z" fill="url(#pg)"/>
<path d="M336.0 475.4H415.00V484.40H336.0Z" fill="#5a8ecc"/>
<circle cx="330" cy="420.5" r="2.9" fill="#3f7fd4"/>
<circle cx="358.8" cy="420.5" r="2.9" fill="#f2a23c"/>
<circle cx="387" cy="420.5" r="2.9" fill="#d84848"/>
<circle cx="417" cy="420.5" r="2.9" fill="#a6d65a"/>
</svg>
<div class="a" style="left:334.70px;top:418.08px;font-size:6.4px;line-height:6.4px;color:#111;font-weight:normal;font-style:normal;letter-spacing:-0.218px">Google</div>
<div class="a" style="left:363.00px;top:418.08px;font-size:6.4px;line-height:6.4px;color:#111;font-weight:normal;font-style:normal;letter-spacing:-0.097px">Yahoo!</div>
<div class="a" style="left:391.20px;top:418.08px;font-size:6.4px;line-height:6.4px;color:#111;font-weight:normal;font-style:normal;letter-spacing:-0.034px">Yandex</div>
<div class="a" style="left:421.00px;top:418.08px;font-size:6.4px;line-height:6.4px;color:#111;font-weight:normal;font-style:normal;letter-spacing:-0.141px">Mail.ru</div>
<div class="a" style="left:0;top:505px;width:100px;height:10px;background:#eef3fb"></div>
<div class="a" style="left:10px;top:506px;width:78px;height:9px;background:linear-gradient(#d0e0fa,#b6cdf4);border:1px solid #a8c0e8"></div>
<div class="a" style="left:1px;top:506px;width:8px;height:9px;background:#c8d8f4;border:1px solid #a8c0e8"></div>
<div class="a" style="left:89px;top:506px;width:10px;height:9px;background:#c8d8f4;border:1px solid #a8c0e8"></div>
<svg class="a" style="left:0;top:505px" width="100" height="10"><path d="M6 7.5L3.5 5L6 2.5M93 2.5L95.5 5L93 7.5" stroke="#223" stroke-width="1.1" fill="none"/><rect x="48" y="4" width="2" height="4" fill="#fff" stroke="#7a9ad0" stroke-width="0.5"/></svg>
<div class="a" style="left:101px;top:262px;width:4px;height:23px;background:#e4e4e4;border-top:1px solid #ccc;border-bottom:1px solid #ccc"></div>
<svg class="a" style="left:101px;top:270px" width="4" height="6"><path d="M3.5 0.5V5.5L0.8 3Z" fill="#666"/></svg>
</body></html>
